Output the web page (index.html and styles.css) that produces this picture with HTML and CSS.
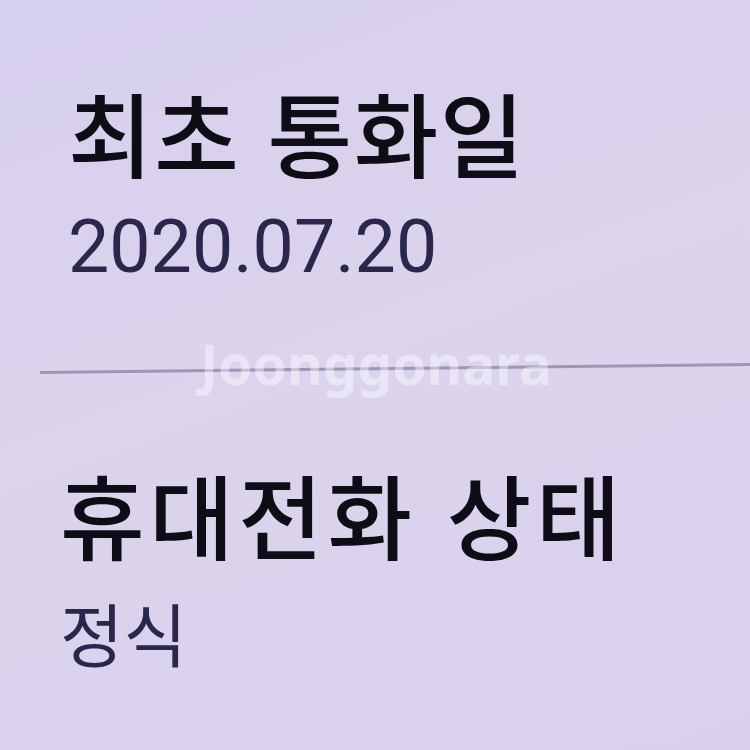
FILE: index.html
```html
<!DOCTYPE html>
<html lang="ko">
<head>
<meta charset="utf-8">
<link rel="stylesheet" href="styles.css">
</head>
<body>
<div class="screen">
  <section class="item first">
    <div class="label">최초 통화일</div>
    <div class="value num">2020.07.20</div>
  </section>
  <div class="divider"></div>
  <section class="item second">
    <div class="label">휴대전화 상태</div>
    <div class="value">정식</div>
  </section>
  <div class="watermark">Joonggonara</div>
</div>
</body>
</html>
```
FILE: styles.css
```css
html, body {
  margin: 0;
  padding: 0;
}
body {
  width: 750px;
  height: 750px;
  overflow: hidden;
  background: #d9d1ed;
}
.screen {
  position: relative;
  width: 750px;
  height: 750px;
  background: linear-gradient(160deg, #d6cfee 0%, #dcd3ec 45%, #d9d0ee 100%);
  font-family: "Noto Sans CJK KR", "Noto Sans", sans-serif;
  display: flex;
  flex-direction: column;
}
.item {
  display: flex;
  flex-direction: column;
}
.first {
  padding-top: 76px;
  padding-left: 68px;
}
.second {
  padding-top: 88px;
  padding-left: 60px;
}
.label {
  font-size: 92px;
  font-weight: 500;
  line-height: 110px;
  color: #0e0d16;
  letter-spacing: 3px;
}
.first .label {
  letter-spacing: 1.5px;
}
.second .label {
  letter-spacing: 4.5px;
}
.value {
  font-size: 69px;
  line-height: 128px;
  color: #29274c;
}
.value.num {
  font-family: Roboto, "Noto Sans", sans-serif;
  font-size: 73.5px;
  line-height: 122px;
}
.divider {
  margin-top: 59px;
  margin-left: 40px;
  height: 3px;
  background: #9d97b5;
  transform: rotate(-0.65deg);
}
.watermark {
  position: absolute;
  left: 200px;
  top: 326px;
  font-family: "Noto Sans", sans-serif;
  font-size: 55px;
  font-weight: 700;
  color: rgba(255, 255, 255, 0.42);
}
```
